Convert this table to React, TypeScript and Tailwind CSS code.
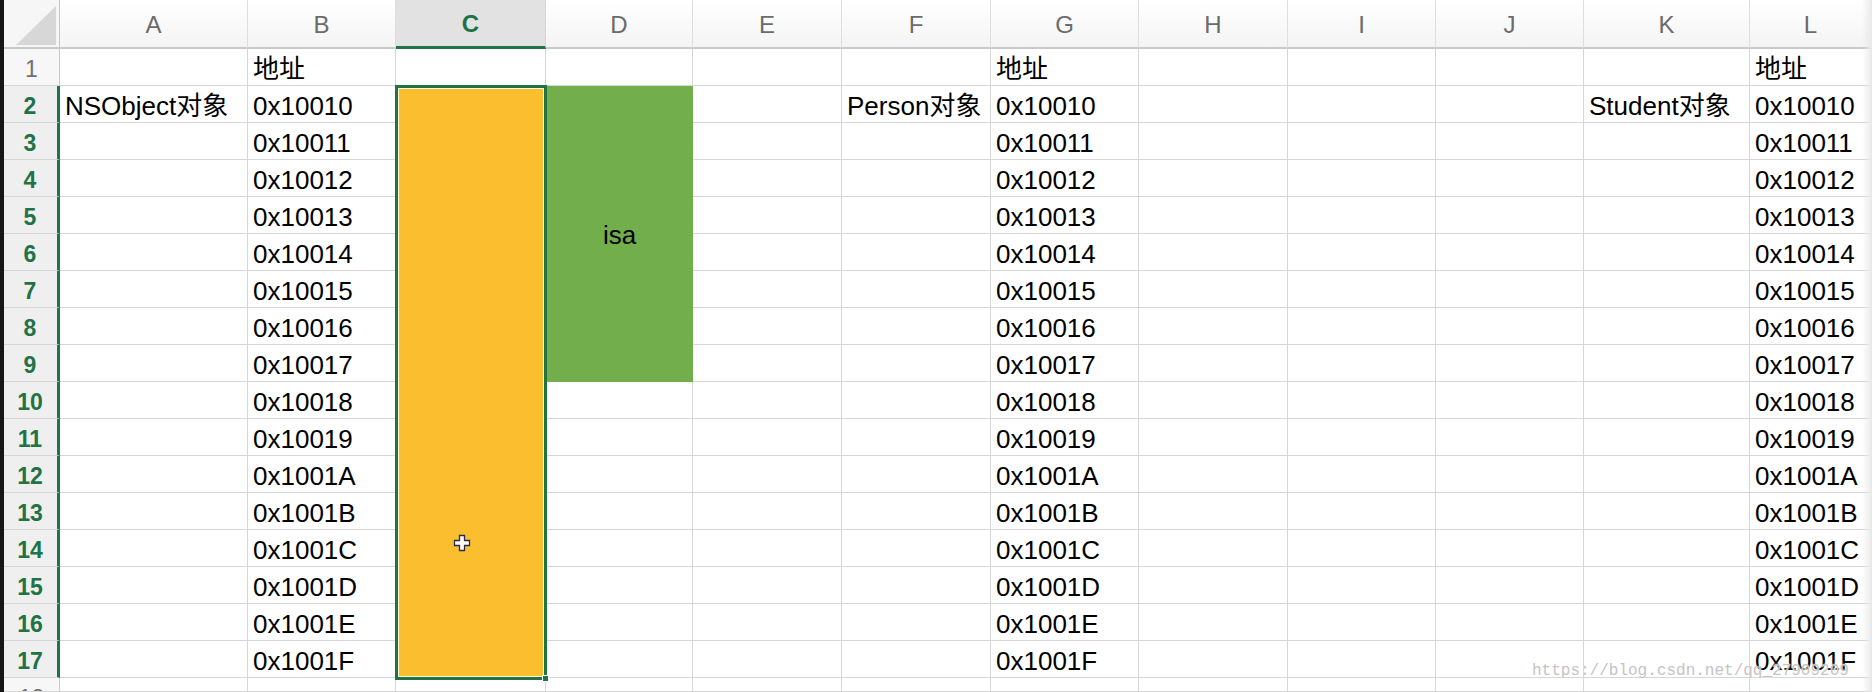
import React from "react";

const cols = ["A", "B", "C", "D", "E", "F", "G", "H", "I", "J", "K", "L"];
const addrs = Array.from({ length: 16 }, (_, i) => "0x100" + (16 + i).toString(16).toUpperCase());

const cellBase =
  "border-r border-b border-[#d6d6d6] overflow-hidden whitespace-nowrap text-[26px] leading-[40px] pl-[5px] text-black";

const Cell = ({ text = "" }: { text?: string }) => <div className={cellBase}>{text}</div>;

const App = () => {
  const rows = Array.from({ length: 18 }, (_, i) => i + 1);

  const addrOf = (r: number) => (r === 1 ? "地址" : r >= 2 && r <= 17 ? addrs[r - 2] : "");

  return (
    <div className="relative w-[1872px] h-[692px] overflow-hidden bg-white flex font-['Liberation_Sans','Noto_Sans_CJK_SC',sans-serif]">
      {/* dark strip on the left edge */}
      <div className="w-[4px] h-full bg-[#161616] shrink-0" />

      <div className="grid flex-1 h-full grid-cols-[56px_188px_148px_150px_147px_149px_149px_148px_149px_148px_148px_166px_1fr] grid-rows-[49px_repeat(17,37px)_1fr]">
        {/* corner */}
        <div className="bg-[#f6f6f6] border-r border-b-2 border-[#c9c9c9] relative">
          <svg width="56" height="47" className="absolute inset-0">
            <polygon points="12,45 52,45 52,6" fill="#d7d7d7" />
          </svg>
        </div>

        {/* column headers */}
        {cols.map((c) =>
          c === "C" ? (
            <div
              key={c}
              className="bg-[#e2e2e2] border-r border-[#d6d6d6] border-b-[3px] border-b-[#217346] flex items-center justify-center pt-[2px] text-[24px] font-bold text-[#217346]"
            >
              {c}
            </div>
          ) : (
            <div
              key={c}
              className="bg-gradient-to-b from-white to-[#f4f4f4] border-r border-[#dedede] border-b-2 border-b-[#c9c9c9] flex items-center justify-center pt-[2px] text-[24px] text-[#6b6b6b]"
            >
              {c}
            </div>
          )
        )}

        {rows.map((r) => {
          const selected = r >= 2 && r <= 17;
          return (
            <React.Fragment key={r}>
              {/* row header */}
              {selected ? (
                <div className="bg-[#efefef] border-b border-[#d6d6d6] border-r-[3px] border-r-[#217346] flex justify-center text-[23px] leading-[40px] font-bold text-[#217346] pr-[1px]">
                  {r}
                </div>
              ) : (
                <div className="bg-[#f7f7f7] border-b border-[#d6d6d6] border-r border-r-[#c9c9c9] flex justify-center text-[23px] leading-[40px] text-[#707070] overflow-hidden">
                  {r}
                </div>
              )}

              {/* A */}
              <Cell text={r === 2 ? "NSObject对象" : ""} />
              {/* B */}
              <Cell text={addrOf(r)} />

              {/* C */}
              {r === 2 && (
                <div className="row-span-16 relative bg-[#fbbe2e]">
                  <div className="absolute -left-px -right-px -top-px -bottom-[2px] border-[3px] border-[#217346] shadow-[inset_0_0_0_1px_#fff6dc]">
                    <div className="absolute -right-[5px] -bottom-[5px] w-[7px] h-[7px] bg-[#217346] border border-white" />
                  </div>
                </div>
              )}
              {(r === 1 || r === 18) && <Cell />}

              {/* D */}
              {r === 2 && (
                <div className="row-span-8 bg-[#72ae4c] flex items-center justify-center text-[26px] text-black pt-[3px]">
                  isa
                </div>
              )}
              {(r === 1 || r >= 10) && <Cell />}

              {/* E */}
              <Cell />
              {/* F */}
              <Cell text={r === 2 ? "Person对象" : ""} />
              {/* G */}
              <Cell text={addrOf(r)} />
              {/* H I J */}
              <Cell />
              <Cell />
              <Cell />
              {/* K */}
              <Cell text={r === 2 ? "Student对象" : ""} />
              {/* L */}
              <Cell text={addrOf(r)} />
            </React.Fragment>
          );
        })}
      </div>

      {/* right edge shade */}
      <div className="absolute right-0 top-0 h-full w-[10px] bg-gradient-to-r from-transparent to-[#e9e9e9]" />

      {/* cursor */}
      <svg width="18" height="18" viewBox="0 0 18 18" className="absolute left-[453px] top-[534px]">
        <path
          d="M6.5 1.5 H11.5 V6.5 H16.5 V11.5 H11.5 V16.5 H6.5 V11.5 H1.5 V6.5 H6.5 Z"
          fill="#ffffff"
          stroke="#2b2b4a"
          strokeWidth="1.3"
        />
      </svg>

      {/* watermark */}
      <div className="absolute left-[1532px] top-[661px] text-[16px] leading-[20px] text-[#c4c4c4] font-['Liberation_Mono',monospace] [text-shadow:0_0_2px_#ffffff]">
        https://blog.csdn.net/qq_27909209
      </div>
    </div>
  );
};

export default App;
